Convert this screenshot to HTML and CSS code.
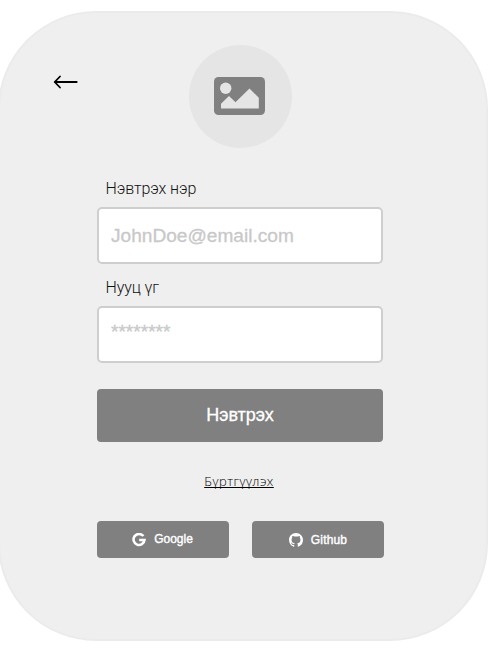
FILE: index.html
```
<!DOCTYPE html>
<html lang="mn">
<head>
<meta charset="utf-8">
<title>Нэвтрэх</title>
<link rel="stylesheet" href="styles.css">
</head>
<body>
<main class="card">
  <header class="top">
    <a class="back" href="#" aria-label="Буцах">
      <svg width="26" height="14" viewBox="0 0 26 14" fill="none" stroke="#000" stroke-linecap="round" stroke-linejoin="round"><path stroke-width="1.8" d="M1.700 7h22M7 1.500L1.700 7l5.300 5.500"/></svg>
    </a>
    <div class="avatar">
      <svg width="51" height="38" viewBox="0 0 51 38"><rect width="51" height="38" rx="4.500" fill="#808080"/><circle cx="11.700" cy="11.300" r="5.700" fill="#e5e5e5"/><path fill="#e5e5e5" d="M7 31.500v-4.800l8-7.700 6.500 6.300L35.500 11.500l9.300 9.200v10.800z"/></svg>
    </div>
  </header>
  <form class="form">
    <label class="label" for="user">Нэвтрэх нэр</label>
    <input class="field" id="user" type="text" placeholder="JohnDoe@email.com">
    <label class="label second" for="pass">Нууц үг</label>
    <input class="field stars" id="pass" type="password" placeholder="********">
    <button class="submit" type="button">Нэвтрэх</button>
    <a class="register" href="#">Бүртгүүлэх</a>
    <div class="social">
      <button class="provider google" type="button">
        <svg width="14" height="14" viewBox="0 0 14 14" fill="none" stroke="#fff" stroke-width="2.500"><path d="M11.400 3.100A5.500 5.500 0 1 0 12.500 7H7.200"/></svg>
        <span>Google</span>
      </button>
      <button class="provider github" type="button">
        <svg width="14" height="14" viewBox="0 0 16 16" fill="#fff"><path d="M8 0C3.580 0 0 3.580 0 8c0 3.540 2.290 6.530 5.470 7.590.4.070.55-.17.55-.38 0-.19-.01-.82-.01-1.490-2.010.37-2.530-.49-2.690-.94-.09-.23-.48-.94-.82-1.130-.28-.15-.68-.52-.01-.53.63-.01 1.080.58 1.230.82.72 1.210 1.870.87 2.330.66.070-.52.28-.87.51-1.070-1.780-.2-3.640-.89-3.640-3.950 0-.87.31-1.590.82-2.150-.08-.2-.36-1.020.08-2.120 0 0 .67-.21 2.200.82.64-.18 1.320-.27 2-.27s1.360.09 2 .27c1.530-1.040 2.200-.82 2.200-.82.44 1.100.16 1.920.08 2.120.51.56.82 1.270.82 2.150 0 3.070-1.870 3.750-3.650 3.950.29.25.54.73.54 1.480 0 1.070-.01 1.930-.01 2.200 0 .21.15.46.55.38A8.010 8.010 0 0 0 16 8c0-4.420-3.580-8-8-8z"/></svg>
        <span>Github</span>
      </button>
    </div>
  </form>
</main>
</body>
</html>
```
FILE: styles.css
```
* { box-sizing: border-box; }
html { overflow: hidden; background: #fff; }
body { margin: 0; height: 658px; overflow: hidden; padding-top: 11px; }
.card {
  width: 490px;
  height: 629.5px;
  margin-left: -2px;
  padding-top: 32px;
  background: #efefef;
  border: 2px solid #ebebeb;
  border-radius: 98px;
}
.top {
  display: grid;
  grid-template-columns: 188.5px 103px;
  height: 103px;
}
.back { margin: 30px 0 0 52.5px; height: 14px; }
.back svg, .avatar svg { display: block; }
.avatar {
  display: flex;
  align-items: center;
  justify-content: center;
  padding: 0 1px 1px 0;
  border-radius: 50%;
  background: #e5e5e5;
}
.form {
  width: 287px;
  margin: 30px 0 0 97px;
  display: flex;
  flex-direction: column;
}
.label {
  height: 29px;
  padding-left: 8.5px;
  font: 300 16px/22px Roboto, sans-serif;
  letter-spacing: -.1px;
  color: #111;
}
.second { margin-top: 12.5px; }
.field {
  width: 286px;
  height: 57px;
  padding: 0 12px;
  border: 2px solid #cecece;
  border-radius: 5px;
  background: #fff;
  font: 19.1px "Liberation Sans", Arial, sans-serif;
  outline: 0;
}
.field::placeholder { color: #c8c8c8; opacity: 1; -webkit-text-stroke: .3px #c8c8c8; }
.stars { padding-bottom: 4px; }
.submit, .provider { border: 0; background: #808080; color: #fff; border-radius: 4px; padding: 0; }
.submit {
  width: 286px;
  height: 53px;
  margin-top: 26px;
  font: 18px "Liberation Sans", Arial, sans-serif;
  -webkit-text-stroke: .3px #fff;
}
.register {
  align-self: center;
  margin: 30.5px 3px 0 0;
  font: 300 13px/18px "Open Sans", sans-serif;
  letter-spacing: .5px;
  color: #000;
  text-decoration: underline;
  text-decoration-skip-ink: none;
}
.social { display: flex; justify-content: space-between; margin-top: 31px; }
.provider {
  width: 132px;
  height: 37px;
  display: flex;
  align-items: center;
  justify-content: center;
  gap: 8px;
  font: 400 12px "Liberation Sans", Arial, sans-serif;
  -webkit-text-stroke: .4px #fff;
}
.google { padding-right: 1px; }
.google span { margin-top: -2px; }
.github { letter-spacing: .15px; }
```
